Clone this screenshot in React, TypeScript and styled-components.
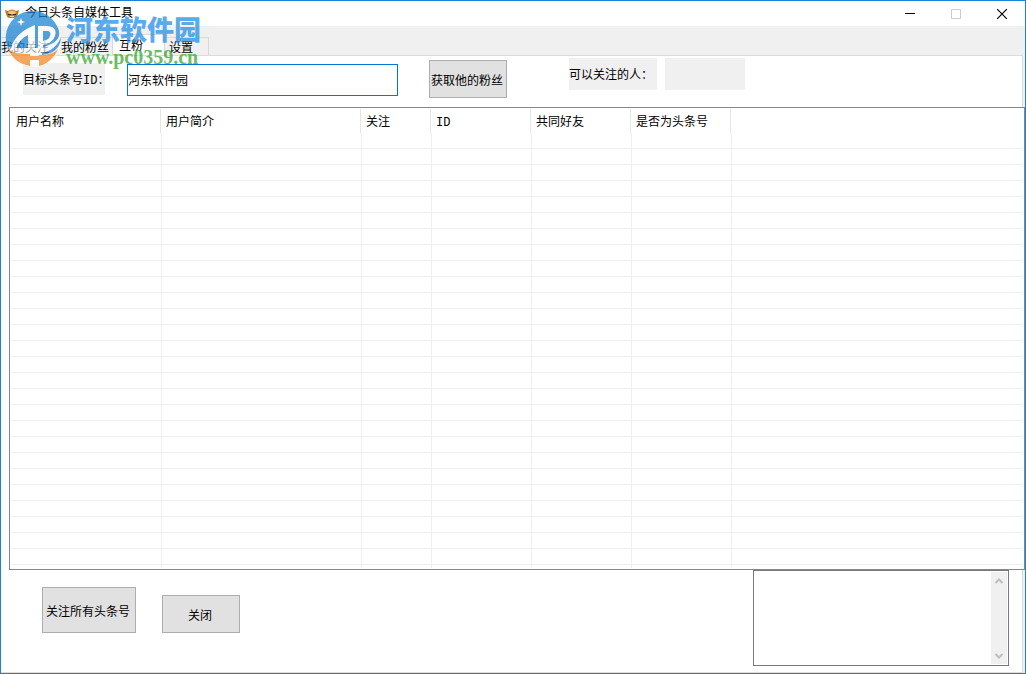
import React from "react";
import styled, { createGlobalStyle } from "styled-components";

const GlobalStyle = createGlobalStyle`
  *, *::before, *::after { box-sizing: border-box; }
  body {
    margin: 0;
    background: #fff;
    color: #000;
    font: 12px/16px "Noto Sans CJK SC", sans-serif;
  }
  button, input, textarea { font: inherit; color: inherit; border-radius: 0; margin: 0; }
`;

const Window = styled.div`
  position: relative;
  display: flex;
  flex-direction: column;
  min-height: 100vh;
  border: 1px solid #1883d7;
  background: #f0f0f0;
  overflow: hidden;
`;

const TitleBar = styled.header`
  display: flex;
  align-items: center;
  height: 25px;
  padding-left: 4px;
  background: #fff;
`;

const Title = styled.h1`
  flex: 1;
  margin: 0 0 0 6px;
  padding-bottom: 3px;
  font-size: 12px;
  font-weight: 400;
`;

const CaptionButton = styled.button`
  display: flex;
  align-items: center;
  justify-content: center;
  width: 46px;
  height: 25px;
  padding: 0;
  border: 0;
  background: none;
  color: #000;
  &:disabled { color: #ccc; }
`;

const Tabs = styled.nav`
  display: flex;
  align-items: flex-end;
  height: 29px;
`;

const Tab = styled.button<{ $width: number; $active?: boolean; $indent?: number }>`
  width: ${(p) => p.$width}px;
  height: ${(p) => (p.$active ? 21 : 18)}px;
  padding: 0 0 0 ${(p) => p.$indent ?? 6}px;
  border: 1px solid #d9d9d9;
  border-width: 1px 1px 0 0;
  background: ${(p) => (p.$active ? "#fff" : "#f0f0f0")};
  line-height: 16px;
  text-align: left;
  white-space: nowrap;
`;

const Panel = styled.main`
  flex: 1;
  display: flex;
  flex-direction: column;
  margin-right: 2px;
  border: 1px solid #dcdcdc;
  border-left: 0;
  background: #fff;
`;

const Toolbar = styled.form`
  display: flex;
  align-items: flex-start;
  height: 51px;
  padding: 2px 0 0 22px;
`;

const Latin = styled.span`
  font-family: "Liberation Mono", monospace;
  line-height: 1;
`;

const FieldLabel = styled.label`
  width: 82px;
  height: 32px;
  margin: 5px 22px 0 0;
  background: #f0f0f0;
  line-height: 32px;
  white-space: nowrap;
`;

const TextInput = styled.input`
  width: 271px;
  height: 32px;
  margin: 6px 31px 0 0;
  padding: 0 0 2px;
  border: 1px solid #0078d7;
  outline: 0;
  background: #fff;
`;

const PushButton = styled.button<{ $width: number; $height: number }>`
  width: ${(p) => p.$width}px;
  height: ${(p) => p.$height}px;
  padding: 2px 2px 0 0;
  border: 1px solid #adadad;
  background: #e1e1e1;
  white-space: nowrap;
`;

const FetchButton = styled(PushButton)`
  margin: 2px 62px 0 0;
`;

const Readout = styled.output<{ $width: number }>`
  width: ${(p) => p.$width}px;
  height: 32px;
  margin-right: 8px;
  background: #f0f0f0;
  line-height: 32px;
  white-space: nowrap;
`;

const ListView = styled.section`
  margin: 0 -3px 0 8px;
  padding: 1px;
  border: 1px solid #828790;
  background: #fff;
`;

const Grid = styled.table`
  width: 100%;
  table-layout: fixed;
  border-collapse: separate;
  border-spacing: 0;
`;

const HeadCell = styled.th`
  height: 24px;
  padding: 0 5px;
  border-right: 1px solid #e5e5e5;
  font-weight: 400;
  text-align: left;
  &:last-child { border-right: 0; }
`;

const Cell = styled.td`
  height: 16px;
  padding: 0;
  border-bottom: 1px solid #f0f0f0;
  & + & { border-left: 1px solid #f0f0f0; }
  tr:last-child > & { height: 3px; border-bottom: 0; }
`;

const Footer = styled.footer`
  display: flex;
  align-items: flex-start;
  padding: 0 13px 6px 41px;
`;

const Actions = styled.div`
  flex: 1;
  display: flex;
  align-items: flex-end;
  gap: 26px;
  padding-top: 17px;
`;

const LogBox = styled.div`
  display: flex;
  width: 256px;
  height: 96px;
  padding: 1px;
  border: 1px solid #7a7a7a;
  background: #fff;
`;

const LogText = styled.textarea`
  flex: 1;
  min-width: 0;
  padding: 2px;
  border: 0;
  outline: 0;
  resize: none;
  overflow: hidden;
  background: #fff;
`;

const ScrollBar = styled.div`
  display: flex;
  flex-direction: column;
  justify-content: space-between;
  width: 16px;
  background: #f0f0f0;
`;

const ScrollButton = styled.button`
  display: flex;
  align-items: center;
  justify-content: center;
  height: 17px;
  padding: 0;
  border: 0;
  background: none;
`;

const Watermark = styled.div`
  position: absolute;
  top: 10px;
  left: 3px;
  display: flex;
  gap: 3px;
  opacity: 0.75;
  pointer-events: none;
`;

const WatermarkName = styled.div`
  color: #2490e6;
  font: 900 27px/36px "Noto Sans CJK SC", sans-serif;
`;

const WatermarkSite = styled.div`
  color: #3aa630;
  font: 700 20px/20px "Liberation Serif", serif;
`;

const columns = [
  { title: "用户名称", width: 150 },
  { title: "用户简介", width: 200 },
  { title: "关注", width: 70 },
  { title: "ID", width: 100, latin: true },
  { title: "共同好友", width: 100 },
  { title: "是否为头条号", width: 100 },
  { title: "" },
];

const rows = Array.from({ length: 28 }, (_, i) => i);

const AppIcon = () => (
  <svg width="14" height="10" viewBox="0 0 14 10" aria-hidden="true">
    <path d="M0 1l3 1q4-3 8 0l3-1-1 4q-1 4-4 4H5Q2 9 1 5z" fill="#b9782a" />
    <path d="M3 3q4-3 8 0l-1 2H4z" fill="#f4c766" />
    <path d="M3 5h3v1H3zM8 5h3v1H8z" fill="#3d2410" />
    <path d="M5 7h4v1H5z" fill="#f9dda0" />
  </svg>
);

const Logo = () => (
  <svg width="59" height="58" viewBox="0 0 59 58" aria-hidden="true">
    <circle cx="30" cy="29" r="27" fill="#fff" fillOpacity="0.8" />
    <path d="M3 35A27 27 0 0 1 53 15C58 24 54 30 47 33 41 36 36 37 31 37H10C7 37 5 36 3 35z" fill="#1e86d4" />
    <path d="M7 38C9 27 18 19 31 14v25h-7V24c-6 3-10 7-12 14z" fill="#fff" />
    <path d="M34 39V15h8c8 0 11 4 9 10-2 5-6 8-12 9v5z" fill="#fff" />
    <path d="M39 20h4c3 0 4 2 3 5s-3 4-7 5z" fill="#1e86d4" />
    <path d="M38 42c10-2 16-8 19-16 0 9-6 17-19 18z" fill="#1e86d4" />
    <path d="M5 39c4 3 12 4 21 4v2h9v-1c9 0 15-2 19-6-3 8-10 15-19 17v-6h-9v6C16 53 8 48 5 39z" fill="#f28c28" />
    <path d="M17 7l1 3 3 1-3 1-1 3-1-3-3-1 3-1z" fill="#fff" />
  </svg>
);

export default function App() {
  return (
    <>
      <GlobalStyle />
      <Window>
        <TitleBar>
          <AppIcon />
          <Title>今日头条自媒体工具</Title>
          <CaptionButton type="button" aria-label="最小化">
            <svg width="10" height="10" viewBox="0 0 10 10"><path d="M0 4.500h10" stroke="currentColor" /></svg>
          </CaptionButton>
          <CaptionButton type="button" aria-label="最大化" disabled>
            <svg width="10" height="10" viewBox="0 0 10 10"><path d="M.5.5h9v9h-9z" fill="none" stroke="currentColor" /></svg>
          </CaptionButton>
          <CaptionButton type="button" aria-label="关闭窗口">
            <svg width="10" height="10" viewBox="0 0 10 10"><path d="M0 0l10 10M10 0L0 10" stroke="currentColor" strokeWidth="1.200" /></svg>
          </CaptionButton>
        </TitleBar>
        <Tabs>
          <Tab type="button" $width={54} $indent={0}>我的关注</Tab>
          <Tab type="button" $width={58}>我的粉丝</Tab>
          <Tab type="button" $width={52} $active>互粉</Tab>
          <Tab type="button" $width={44} $indent={4}>设置</Tab>
        </Tabs>
        <Panel>
          <Toolbar onSubmit={(e) => e.preventDefault()}>
            <FieldLabel htmlFor="target">目标头条号<Latin>ID</Latin>：</FieldLabel>
            <TextInput id="target" type="text" defaultValue="河东软件园" />
            <FetchButton type="submit" $width={78} $height={38}>获取他的粉丝</FetchButton>
            <Readout $width={88}>可以关注的人：</Readout>
            <Readout $width={80} />
          </Toolbar>
          <ListView>
            <Grid>
              <colgroup>
                {columns.map((c) => <col key={c.title} width={c.width} />)}
              </colgroup>
              <thead>
                <tr>
                  {columns.map((c) => (
                    <HeadCell key={c.title} scope="col">
                      {c.latin ? <Latin>{c.title}</Latin> : c.title}
                    </HeadCell>
                  ))}
                </tr>
              </thead>
              <tbody>
                {rows.map((r) => (
                  <tr key={r}>{columns.map((c) => <Cell key={c.title} />)}</tr>
                ))}
              </tbody>
            </Grid>
          </ListView>
          <Footer>
            <Actions>
              <PushButton type="button" $width={94} $height={46}>关注所有头条号</PushButton>
              <PushButton type="button" $width={78} $height={38}>关闭</PushButton>
            </Actions>
            <LogBox>
              <LogText aria-label="日志" />
              <ScrollBar>
                <ScrollButton type="button" aria-label="向上滚动">
                  <svg width="8" height="6" viewBox="0 0 8 6"><path d="M.5 5L4 1.500 7.500 5" fill="none" stroke="#bfbfbf" strokeWidth="2" /></svg>
                </ScrollButton>
                <ScrollButton type="button" aria-label="向下滚动">
                  <svg width="8" height="6" viewBox="0 0 8 6"><path d="M.5 1L4 4.500 7.500 1" fill="none" stroke="#bfbfbf" strokeWidth="2" /></svg>
                </ScrollButton>
              </ScrollBar>
            </LogBox>
          </Footer>
        </Panel>
        <Watermark>
          <Logo />
          <div>
            <WatermarkName>河东软件园</WatermarkName>
            <WatermarkSite>www.pc0359.cn</WatermarkSite>
          </div>
        </Watermark>
      </Window>
    </>
  );
}
